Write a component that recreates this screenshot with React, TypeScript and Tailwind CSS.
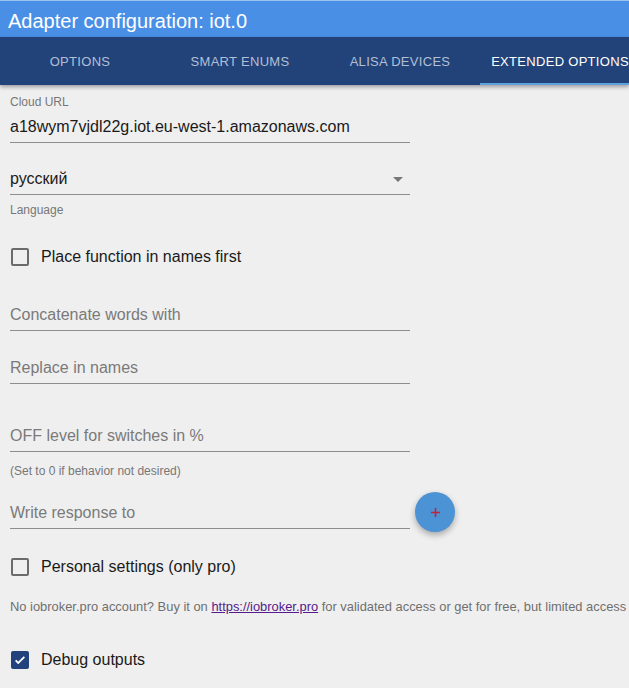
import React from "react";

const Checkbox = ({ checked, label }: { checked?: boolean; label: string }) => (
  <div className="flex h-[34px] items-center">
    {checked ? (
      <div className="ml-[1px] flex h-[18px] w-[18px] items-center justify-center rounded-[2px] bg-[#22437b]">
        <svg width="14" height="14" viewBox="0 0 24 24" fill="none">
          <path d="M4.5 12.5l4.5 4.5 10.5-10.5" stroke="#fff" strokeWidth="3" />
        </svg>
      </div>
    ) : (
      <div className="ml-[1px] h-[18px] w-[18px] rounded-[2px] border-2 border-[#6b6b6b]" />
    )}
    <span className="ml-[12px] text-[16px] leading-[20px] text-[#1a1a1a]">{label}</span>
  </div>
);

const Field = ({ text, className = "" }: { text: string; className?: string }) => (
  <div className={`w-[400px] border-b border-[#8d8d8d] pb-[5px] text-[16px] leading-[20px] text-[#7a7a7a] ${className}`}>
    {text}
  </div>
);

export default function App() {
  const tabs = ["OPTIONS", "SMART ENUMS", "ALISA DEVICES", "EXTENDED OPTIONS"];
  return (
    <div
      className="h-[688px] w-[629px] overflow-hidden bg-[#efefef]"
      style={{ fontFamily: '"Liberation Sans", Arial, sans-serif' }}
    >
      <div className="flex h-[37px] items-center border-t border-[#9cc3f0] bg-[#4a8fe6] pl-[8px] pt-[3px] text-[20px] text-white">
        Adapter configuration: iot.0
      </div>
      <div className="relative z-10 flex h-[48px] bg-[#224379] shadow-[0_2px_4px_rgba(0,0,0,0.35)]">
        {tabs.map((t, i) => (
          <div
            key={t}
            className={`flex w-[160px] shrink-0 items-center justify-center whitespace-nowrap pt-[3px] text-[13px] tracking-[0.3px] ${
              i === 3 ? "border-b-2 border-[#5ea1dc] text-white" : "border-b-2 border-transparent text-[#b3bfd6]"
            }`}
          >
            {t}
          </div>
        ))}
      </div>

      <div className="flex flex-col pl-[10px] pt-[10px]">
        <div className="text-[12px] leading-[14px] text-[#777]">Cloud URL</div>
        <div className="w-[400px] border-b border-[#8d8d8d] pb-[5px] pt-[8px] text-[16px] leading-[20px] text-[#1a1a1a]">
          a18wym7vjdl22g.iot.eu-west-1.amazonaws.com
        </div>

        <div className="mt-[26px] flex w-[400px] items-center justify-between border-b border-[#8d8d8d] pb-[5px] text-[16px] leading-[20px] text-[#1a1a1a]">
          <span>русский</span>
          <svg width="10" height="5" viewBox="0 0 10 5" className="mr-[7px]">
            <path d="M0 0h10L5 5z" fill="#777" />
          </svg>
        </div>
        <div className="mt-[8px] text-[12px] leading-[14px] text-[#777]">Language</div>

        <div className="mt-[23px]">
          <Checkbox label="Place function in names first" />
        </div>

        <Field text="Concatenate words with" className="mt-[31px]" />
        <Field text="Replace in names" className="mt-[27px]" />
        <Field text="OFF level for switches in %" className="mt-[42px]" />
        <div className="mt-[12px] text-[12px] leading-[14px] text-[#777]">(Set to 0 if behavior not desired)</div>

        <div className="mt-[25px] flex items-start">
          <Field text="Write response to" />
          <div className="ml-[5px] -mt-[11px] flex h-[40px] w-[40px] items-center justify-center rounded-full bg-[#4b93d4] shadow-[0_3px_6px_rgba(0,0,0,0.3)]">
            <svg width="9" height="9" viewBox="0 0 9 9">
              <path d="M4.5 0v9M0 4.5h9" stroke="#c0243c" strokeWidth="1.6" />
            </svg>
          </div>
        </div>

        <div className="mt-[18px]">
          <Checkbox label="Personal settings (only pro)" />
        </div>

        <div className="mt-[16px] whitespace-nowrap text-[12.9px] leading-[14px] text-[#6f6f6f]">
          No iobroker.pro account? Buy it on{" "}
          <a className="text-[#551a8b] underline">https://iobroker.pro</a> for validated access or get for free, but
          limited access
        </div>

        <div className="mt-[29px]">
          <Checkbox checked label="Debug outputs" />
        </div>
      </div>
    </div>
  );
}
